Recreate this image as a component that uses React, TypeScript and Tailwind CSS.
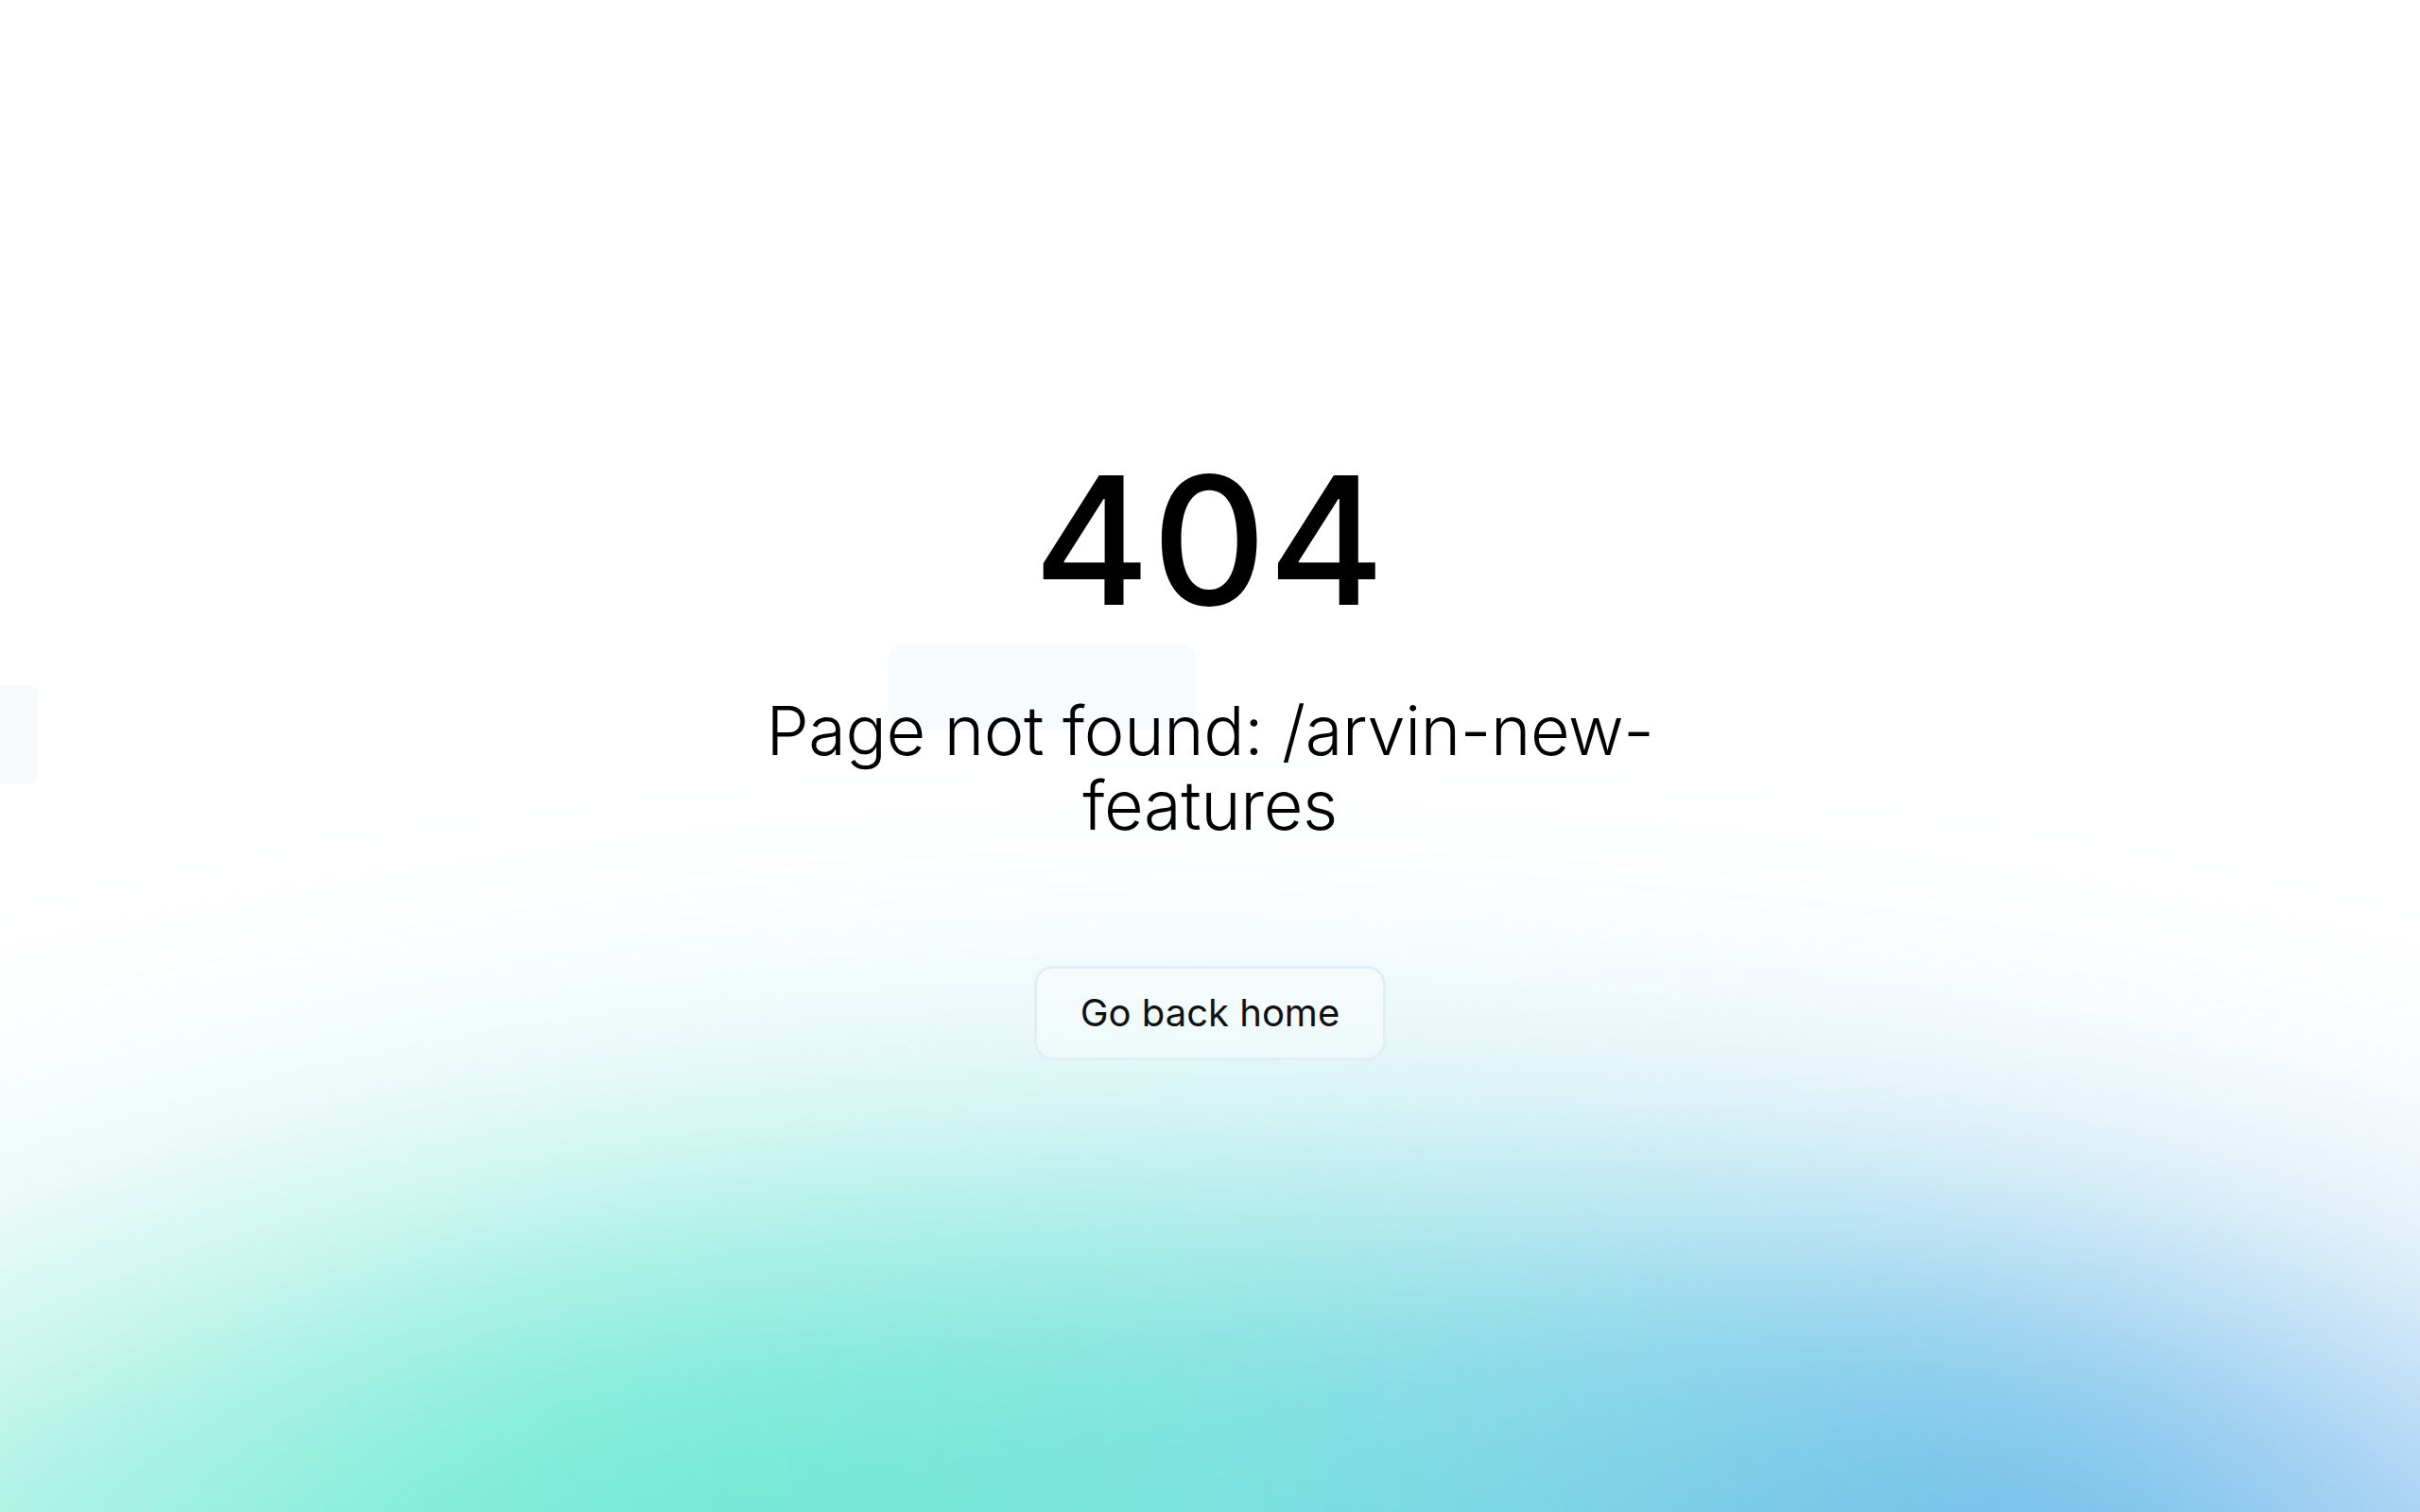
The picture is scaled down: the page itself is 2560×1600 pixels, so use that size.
// 404 page — centered message over a soft mint/blue glow
export default function App() {
  return (
    <div className="relative flex h-screen w-full flex-col items-center justify-center overflow-hidden bg-white font-['Inter',sans-serif] text-black">
      {/* backdrop glow */}
      <div className="pointer-events-none absolute inset-0 bg-[radial-gradient(ellipse_2400px_1000px_at_1280px_1800px,rgba(205,238,246,0.55)_0%,rgba(225,243,249,0.3)_60%,rgba(255,255,255,0)_100%)]" />
      <div className="pointer-events-none absolute left-[-720px] top-[1270px] h-[1400px] w-[4000px] rounded-[50%] blur-[170px] bg-[linear-gradient(90deg,#d2f8ef_0%,#b4f3e6_12%,#9ef0df_20%,#70ead3_34%,#78e2dc_50%,#7cd2e6_60%,#6cbbe9_72%,#9ecbf2_82%,#cfe1f7_92%,#e8f0fa_100%)]" />

      {/* faint ghost shapes from the backdrop */}
      <div className="pointer-events-none absolute left-[940px] top-[682px] h-[90px] w-[325px] rounded-[14px] bg-[#f4f9fd]/60" />
      <div className="pointer-events-none absolute left-0 top-[725px] h-[105px] w-[40px] rounded-r-[10px] bg-[#f2f8fc]/70" />

      <div className="relative flex flex-col items-center text-center">
        <h1 className="text-[188px] font-medium leading-none tracking-[0.01em]">404</h1>

        <p className="mt-[67px] max-w-[1000px] text-[72px] font-light leading-[79px] tracking-[-0.005em] text-black">
          Page not found: /arvin-new-features
        </p>

        <button className="mt-[131px] rounded-[20px] border-[3px] border-[#e1edf8] bg-white/40 px-[46px] py-[17px] text-[40px] leading-[60px] text-[#111]">
          Go back home
        </button>
      </div>
    </div>
  );
}
